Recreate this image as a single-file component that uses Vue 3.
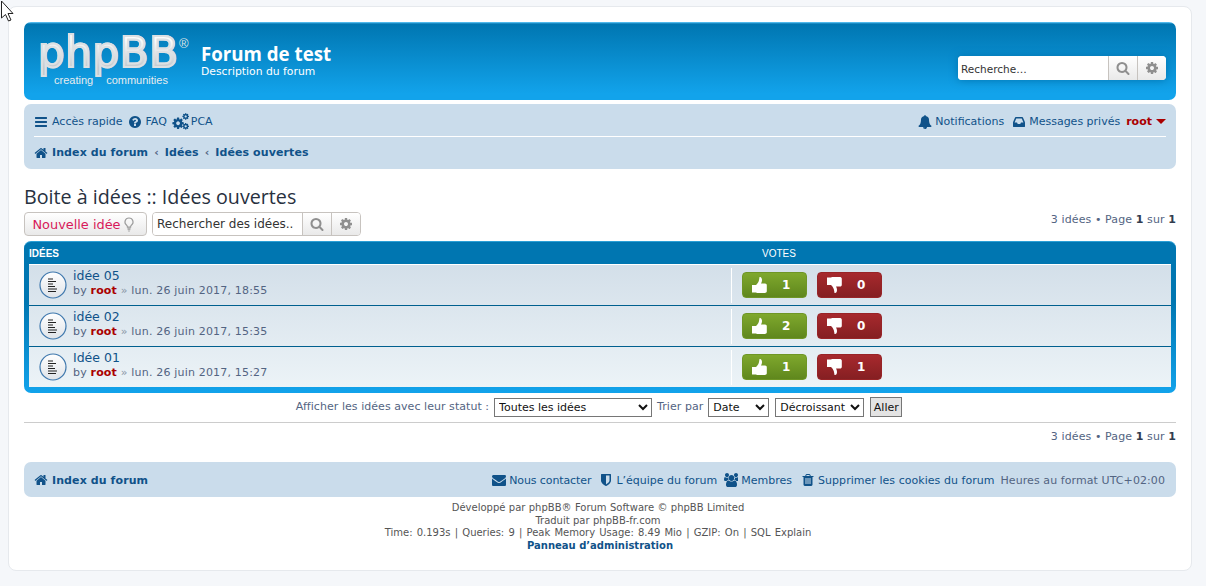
<script setup>
const I = {
  bars: 'M1664 1344v128q0 26-19 45t-45 19h-1408q-26 0-45-19t-19-45v-128q0-26 19-45t45-19h1408q26 0 45 19t19 45zm0-512v128q0 26-19 45t-45 19h-1408q-26 0-45-19t-19-45v-128q0-26 19-45t45-19h1408q26 0 45 19t19 45zm0-512v128q0 26-19 45t-45 19h-1408q-26 0-45-19t-19-45v-128q0-26 19-45t45-19h1408q26 0 45 19t19 45z',
  search: 'M1216 832q0-185-131.500-316.500t-316.500-131.500-316.500 131.500-131.500 316.500 131.500 316.500 316.500 131.500 316.500-131.500 131.500-316.500zm512 832q0 52-38 90t-90 38q-54 0-90-38l-343-342q-179 124-399 124-143 0-273.500-55.500t-225-150-150-225-55.500-273.500 55.500-273.500 150-225 225-150 273.500-55.500 273.500 55.500 225 150 150 225 55.500 273.500q0 220-124 399l343 343q37 37 37 90z',
  cog: 'M1152 896q0-106-75-181t-181-75-181 75-75 181 75 181 181 75 181-75 75-181zm512-109v222q0 12-8 23t-20 13l-185 28q-19 54-39 91 35 50 107 138 10 12 10 25t-9 23q-27 37-99 108t-94 71q-12 0-26-9l-138-108q-44 23-91 38-16 136-29 186-7 28-36 28h-222q-14 0-24.500-8.500t-11.500-21.500l-28-184q-49-16-90-37l-141 107q-10 9-25 9-14 0-25-11-126-114-165-168-7-10-7-23 0-12 8-23 15-21 51-66.500t54-70.500q-27-50-41-99l-183-27q-13-2-21-12.500t-8-23.500v-222q0-12 8-23t19-13l186-28q14-46 39-92-40-57-107-138-10-12-10-24 0-10 9-23 26-36 98.500-107.500t94.500-71.500q13 0 26 10l138 107q44-23 91-38 16-136 29-186 7-28 36-28h222q14 0 24.500 8.500t11.500 21.500l28 184q49 16 90 37l142-107q9-9 24-9 13 0 25 10 129 119 165 170 7 8 7 22 0 12-8 23-15 21-51 66.500t-54 70.500q26 50 41 98l183 28q13 2 21 12.500t8 23.500z',
  home: 'M1472 992v480q0 26-19 45t-45 19h-384v-384h-256v384h-384q-26 0-45-19t-19-45v-480q0-1 .5-3t.5-3l575-474 575 474q1 2 1 6zm223-69l-62 74q-8 9-21 11h-3q-13 0-21-7l-692-577-692 577q-12 8-24 7-13-2-21-11l-62-74q-8-10-7-23.500t11-21.500l719-599q32-26 76-26t76 26l244 204v-195q0-14 9-23t23-9h192q14 0 23 9t9 23v408l219 182q10 8 11 21.500t-7 23.500z',
  question: 'M1024 1376v-192q0-14-9-23t-23-9h-192q-14 0-23 9t-9 23v192q0 14 9 23t23 9h192q14 0 23-9t9-23zm256-672q0-88-55.500-163t-138.500-116-170-41q-243 0-371 213-15 24 8 42l132 100q7 6 19 6 16 0 25-12 53-68 86-92 34-24 86-24 48 0 85.500 26t37.500 59q0 38-20 61t-68 45q-63 28-115.500 86.500t-52.500 125.500v36q0 14 9 23t23 9h192q14 0 23-9t9-23q0-19 21.500-49.500t54.500-49.500q32-18 49-28.500t46-35 44.500-48 28-60.500 12.500-81zm384 192q0 209-103 385.500t-279.500 279.500-385.500 103-385.500-103-279.500-279.500-103-385.500 103-385.500 279.500-279.500 385.500-103 385.500 103 279.500 279.500 103 385.500z',
  bell: 'M912 1696q0-16-16-16-59 0-101.500-42.500t-42.500-101.500q0-16-16-16t-16 16q0 73 51.500 124.500t124.500 51.500q16 0 16-16zm816-288q0 52-38 90t-90 38h-448q0 106-75 181t-181 75-181-75-75-181h-448q-52 0-90-38t-38-90q50-42 91-88t85-119.500 74.500-158.500 50-206 19.500-260q0-152 117-282.500t307-158.500q-8-19-8-39 0-40 28-68t68-28 68 28 28 68q0 20-8 39 190 28 307 158.500t117 282.500q0 139 19.500 260t50 206 74.500 158.500 85 119.500 91 88z',
  inbox: 'M1023 960h316q-1-3-2.500-8.500t-2.500-7.500l-212-496h-708l-212 496q-1 2-2.500 7.500t-2.500 8.500h316l95 192h320zm513 30v482q0 26-19 45t-45 19h-1408q-26 0-45-19t-19-45v-482q0-62 25-123l238-552q10-25 36.500-42t52.500-17h832q26 0 52.500 17t36.500 42l238 552q25 61 25 123z',
  envelope: 'M1792 710v794q0 66-47 113t-113 47h-1472q-66 0-113-47t-47-113v-794q44 49 101 87 362 246 497 345 57 42 92.500 65.500t94.500 48 110 24.500h2q51 0 110-24.500t94.500-48 92.500-65.500q170-123 498-345 57-39 100-87zm0-294q0 79-49 151t-122 123q-376 261-468 325-10 7-42.500 30.500t-54 38-52 32.500-57.500 27-50 9h-2q-23 0-50-9t-57.500-27-52-32.500-54-38-42.500-30.500q-91-64-262-182.500t-205-142.500q-62-42-117-115.500t-55-136.500q0-78 41.500-130t118.500-52h1472q65 0 112.500 47t47.500 113z',
  shield: 'M1344 960v-640h-448v1137q119-63 213-137 235-184 235-360zm192-768v768q0 86-33.500 170.500t-83 150-118 127.500-126.500 103-121 77.500-89.500 49.500-42.500 20q-12 6-26 6t-26-6q-16-7-42.500-20t-89.500-49.500-121-77.500-126.500-103-118-127.500-83-150-33.500-170.500v-768q0-26 19-45t45-19h1152q26 0 45 19t19 45z',
  group: 'M593 896q-162 5-265 128h-134q-82 0-138-40.500t-56-118.500q0-353 124-353 6 0 43.500 21t97.500 42.500 119 21.500q67 0 133-23-5 37-5 66 0 139 81 256zm1071 637q0 120-73 189.500t-194 69.500h-874q-121 0-194-69.500t-73-189.500q0-53 3.500-103.500t14-109 26.500-108.500 43-97.500 62-81 85.500-53.500 111.500-20q10 0 43 21.500t73 48 107 48 135 21.500 135-21.500 107-48 73-48 43-21.500q61 0 111.500 20t85.500 53.500 62 81 43 97.500 26.500 108.500 14 109 3.500 103.500zm-1024-1277q0 106-75 181t-181 75-181-75-75-181 75-181 181-75 181 75 75 181zm704 384q0 159-112.500 271.500t-271.500 112.500-271.500-112.500-112.500-271.500 112.500-271.500 271.500-112.500 271.500 112.500 112.500 271.500zm576 225q0 78-56 118.500t-138 40.500h-134q-103-123-265-128 81-117 81-256 0-29-5-66 66 23 133 23 59 0 119-21.500t97.500-42.500 43.500-21q124 0 124 353zm-128-609q0 106-75 181t-181 75-181-75-75-181 75-181 181-75 181 75 75 181z',
  trash: 'M704 1376v-704q0-14-9-23t-23-9h-64q-14 0-23 9t-9 23v704q0 14 9 23t23 9h64q14 0 23-9t9-23zm256 0v-704q0-14-9-23t-23-9h-64q-14 0-23 9t-9 23v704q0 14 9 23t23 9h64q14 0 23-9t9-23zm256 0v-704q0-14-9-23t-23-9h-64q-14 0-23 9t-9 23v704q0 14 9 23t23 9h64q14 0 23-9t9-23zm-544-992h448l-48-117q-7-9-17-11h-317q-10 2-17 11zm928 32v64q0 14-9 23t-23 9h-96v948q0 83-47 143.500t-113 60.500h-832q-66 0-113-58.500t-47-141.500v-952h-96q-14 0-23-9t-9-23v-64q0-14 9-23t23-9h309l70-167q15-37 54-63t79-26h320q40 0 79 26t54 63l70 167h309q14 0 23 9t9 23z',
  thumb: 'M0 9h4l1-1c1-1 2-3 2.200-5L7.500 1c1.500-.5 2.500 1 2.500 3 0 1.500-.5 2.500-1 3.500h4c1.200 0 1.800.8 1.800 1.800v6c0 1-1 1.700-2 1.700H5l-1-.5H0z'
}
const ideas = [
  { title: 'idée 05', date: 'lun. 26 juin 2017, 18:55', up: 1, down: 0 },
  { title: 'idée 02', date: 'lun. 26 juin 2017, 15:35', up: 2, down: 0 },
  { title: 'Idée 01', date: 'lun. 26 juin 2017, 15:27', up: 1, down: 1 }
]
const lines = [
  { y: 7.500, w: 5 }, { y: 10, w: 8 }, { y: 12.500, w: 5 },
  { y: 15, w: 7 }, { y: 17.500, w: 9 }, { y: 20, w: 8 }
]
</script>

<template>
  <div class="page">
    <svg class="cursor" width="14" height="24" viewBox="0 0 14 24">
      <path d="M1.500 1v17l4-3.500 3 6.500 2.500-1-3-6.500h5z" fill="#fff" stroke="#222" stroke-width="1" />
    </svg>
    <div class="wrap">
      <header class="headerbar">
        <div class="logo">
          <div class="logo-word">phpBB</div>
          <div class="reg">®</div>
          <div class="logo-sub"><span>creating</span><span>communities</span></div>
        </div>
        <div class="site">
          <h1>Forum de test</h1>
          <p>Description du forum</p>
        </div>
        <div class="sbox head-search">
          <input class="sinput" type="text" placeholder="Recherche…" />
          <button class="sbtn"><svg class="ic ic-14" viewBox="0 0 1792 1792"><path :d="I.search" /></svg></button>
          <button class="sbtn"><svg class="ic ic-14" viewBox="0 0 1792 1792"><path :d="I.cog" /></svg></button>
        </div>
      </header>

      <nav class="navbar">
        <div class="nav-row nav-top">
          <div class="links lefts">
            <a class="wide"><svg class="ic" viewBox="0 0 1792 1792"><path :d="I.bars" /></svg>Accès rapide</a>
            <a><svg class="ic" viewBox="0 0 1792 1792"><path :d="I.question" /></svg>FAQ</a>
            <a class="gears">
              <svg class="ic ic-gears" viewBox="0 0 1792 1792">
                <path :d="I.cog" transform="translate(-60 380) scale(.78)" />
                <path :d="I.cog" transform="translate(1040 -40) scale(.45)" />
                <path :d="I.cog" transform="translate(1040 1000) scale(.45)" />
              </svg>PCA
            </a>
          </div>
          <div class="links rights">
            <a><svg class="ic" viewBox="0 0 1792 1792"><path :d="I.bell" /></svg>Notifications</a>
            <a><svg class="ic" viewBox="-128 0 1792 1792"><path :d="I.inbox" /></svg>Messages privés</a>
            <a class="user">root <i class="caret"></i></a>
          </div>
        </div>
        <div class="nav-row crumbs">
          <a><svg class="ic" viewBox="0 0 1792 1792"><path :d="I.home" /></svg>Index du forum</a>
          <span class="sep">‹</span>
          <a>Idées</a>
          <span class="sep">‹</span>
          <a>Idées ouvertes</a>
        </div>
      </nav>

      <h2 class="title">Boite à idées :: Idées ouvertes</h2>

      <div class="action-bar">
        <button class="new-btn">Nouvelle idée
          <svg class="bulb" viewBox="0 0 12 16">
            <path d="M6 1a4.300 4.300 0 0 0-2.500 7.800c.6.500.8 1.200.8 2h3.400c0-.8.2-1.500.8-2A4.300 4.300 0 0 0 6 1z" fill="none" stroke="#9a9a9a" stroke-width="1.200" />
            <path d="M4.300 12h3.400M4.500 13.500h3M5.200 15h1.600" stroke="#9a9a9a" stroke-width="1" />
          </svg>
        </button>
        <div class="sbox idea-search">
          <input class="sinput" type="text" placeholder="Rechercher des idées.." />
          <button class="sbtn"><svg class="ic ic-14" viewBox="0 0 1792 1792"><path :d="I.search" /></svg></button>
          <button class="sbtn"><svg class="ic ic-14" viewBox="0 0 1792 1792"><path :d="I.cog" /></svg></button>
        </div>
        <div class="pagination top-pag">3 idées • Page <b>1</b> sur <b>1</b></div>
      </div>

      <section class="forumbg">
        <div class="heads">
          <span class="h-ideas">Idées</span>
          <span class="h-votes">Votes</span>
        </div>
        <ul class="rows">
          <li v-for="idea in ideas" :key="idea.title" class="row">
            <div class="row-main">
              <svg class="topic" width="28" height="28" viewBox="0 0 28 28">
                <defs>
                  <linearGradient id="tg" x1="0" y1="0" x2="0" y2="1">
                    <stop offset="0" stop-color="#ffffff" />
                    <stop offset="1" stop-color="#dfe3e8" />
                  </linearGradient>
                </defs>
                <circle cx="14" cy="14" r="13" fill="url(#tg)" stroke="#3f78ad" stroke-width="1.200" />
                <rect v-for="(l, k) in lines" :key="k" x="9" :y="l.y" :width="l.w" height="1" fill="#222" />
              </svg>
              <div class="row-text">
                <a class="row-title">{{ idea.title }}</a>
                <div class="row-meta">by <b>root</b> <span class="raq">»</span> {{ idea.date }}</div>
              </div>
            </div>
            <div class="row-votes">
              <div class="vote up">
                <svg class="thumb" viewBox="0 0 15 18"><path :d="I.thumb" /></svg>
                <span>{{ idea.up }}</span>
              </div>
              <div class="vote down">
                <svg class="thumb flip" viewBox="0 0 15 18"><path :d="I.thumb" /></svg>
                <span>{{ idea.down }}</span>
              </div>
            </div>
          </li>
        </ul>
      </section>

      <form class="sortbar" @submit.prevent>
        <label>Afficher les idées avec leur statut :</label>
        <select class="sel s1"><option>Toutes les idées</option></select>
        <label>Trier par</label>
        <select class="sel s2"><option>Date</option></select>
        <select class="sel s3"><option>Décroissant</option></select>
        <button class="go">Aller</button>
      </form>
      <hr class="rule" />
      <div class="pagination bottom-pag">3 idées • Page <b>1</b> sur <b>1</b></div>

      <nav class="navbar foot">
        <div class="links crumbs"><a><svg class="ic" viewBox="0 0 1792 1792"><path :d="I.home" /></svg>Index du forum</a></div>
        <div class="links">
          <a class="contact"><svg class="ic" viewBox="0 0 1792 1792"><path :d="I.envelope" /></svg>Nous contacter</a>
          <a><svg class="ic" viewBox="0 0 1792 1792"><path :d="I.shield" /></svg>L’équipe du forum</a>
          <a class="members"><svg class="ic" viewBox="0 0 1792 1792"><path :d="I.group" /></svg>Membres</a>
          <a class="cookies"><svg class="ic" viewBox="0 0 1792 1792"><path :d="I.trash" /></svg>Supprimer les cookies du forum</a>
          <span class="tz">Heures au format UTC+02:00</span>
        </div>
      </nav>

      <footer class="copy">
        <div class="cl">Développé par phpBB® Forum Software © phpBB Limited</div>
        <div class="cl">Traduit par phpBB-fr.com</div>
        <div class="cl stats">Time: 0.193s | Queries: 9 | Peak Memory Usage: 8.49 Mio | GZIP: On | SQL Explain</div>
        <div class="admin">Panneau d’administration</div>
      </footer>
    </div>
  </div>
</template>

<style>
html, body { margin: 0; background: #f5f7fa; }
</style>

<style scoped>
.page {
  width: 1206px; height: 586px; box-sizing: border-box; padding: 6px 14px 0 8px;
  font-family: "DejaVu Sans", Verdana, sans-serif; font-size: 11px; color: #536482;
  overflow: hidden; position: relative;
}
.cursor { position: absolute; left: 0; top: 0; z-index: 3; }
.wrap {
  width: 1184px; height: 565px; box-sizing: border-box; background: #fff;
  border: 1px solid #e6e9ed; border-radius: 8px; padding: 15px;
}
.ic { width: 14px; height: 14px; fill: #105289; flex: none; }
.ic-14 { width: 14px; height: 14px; fill: #8f8f8f; }
.ic-gears { width: 17px; height: 17px; }
a { color: #105289; display: inline-flex; align-items: center; gap: 3px; }

.headerbar {
  height: 78px; box-sizing: border-box; display: flex; align-items: flex-start;
  border-radius: 7px; padding: 14px 10px 0 14px; color: #fff; position: relative;
  background: linear-gradient(to bottom, #6aceff 0, #0076b1 2px, #12a3eb 92%);
}
.logo { width: 163px; height: 52px; flex: none; position: relative; }
.logo-word {
  font-family: "DejaVu Sans", sans-serif; font-size: 42px; line-height: 50px;
  letter-spacing: .6px; margin: -8px 0 0 0; width: 141px; height: 50px;
  background: linear-gradient(to bottom, #fbfcfc 25%, #c2c8cd 80%);
  -webkit-background-clip: text; background-clip: text; color: transparent;
  -webkit-text-stroke: 2px #dce0e3;
}
.reg {
  font-family: "Liberation Sans", sans-serif; font-size: 13px; line-height: 13px;
  position: absolute; left: 141px; top: 1px; color: #dfe3e6;
}
.logo-sub {
  position: absolute; left: 16px; top: 38px; display: flex; gap: 13px;
  font-family: "Liberation Sans", Arial, sans-serif; font-size: 11px; line-height: 12px; color: #e8ecef;
}
.site h1 {
  margin: 7px 0 0; font-size: 18.700px; line-height: 22px; font-weight: 700; color: #fff;
  font-family: "Open Sans", sans-serif;
}
.site p { margin: 0; font-size: 10.800px; line-height: 13px; color: #fff; }

.sbox { display: flex; height: 24px; box-sizing: border-box; background: #fff; border-radius: 4px; overflow: hidden; }
.head-search { position: absolute; right: 10px; top: 34px; width: 208px; box-shadow: 0 0 8px #0075b0; }
.sinput {
  flex: 1; min-width: 0; border: 0; outline: 0; background: #fff; padding: 2px 3px 0;
  font: 10.500px "DejaVu Sans", sans-serif; color: #333;
}
.sinput::placeholder { color: #333; opacity: 1; }
.sbtn {
  width: 29px; flex: none; padding: 0; display: flex; align-items: center; justify-content: center;
  border: 0; border-left: 1px solid #c7c3bf;
  background: linear-gradient(to bottom, #fff, #e9e9e9);
}

.navbar { background: #cadceb; border-radius: 7px; margin-top: 4px; height: 65px; box-sizing: border-box; }
.nav-row { margin: 0 10px; }
.nav-top {
  display: flex; justify-content: space-between; align-items: center;
  height: 33px; padding-top: 3px; border-bottom: 1px solid #fff; box-sizing: border-box;
}
.links { display: flex; align-items: center; gap: 8px; }
.lefts { gap: 6px; }
.wide { gap: 4px; }
.gears { margin-left: -1px; gap: 2px; }
.rights { gap: 8px; }
.rights a { gap: 3px; }
.rights .user { color: #aa0000; font-weight: 700; gap: 4px; margin-left: -2px; }
.caret { width: 0; height: 0; border: 5px solid transparent; border-top: 5px solid #aa0000; border-bottom: 0; }
.crumbs {
  display: flex; align-items: center; height: 31px; font-weight: 700; gap: 6px; font-size: 11px;
}
.crumbs a { gap: 4px; letter-spacing: .1px; }
.sep { color: #536482; font-weight: 700; font-size: 11px; }

.title {
  margin: 17px 0 0; font-size: 19.700px; line-height: 21px; font-weight: 400; color: #28313f;
  font-family: "Open Sans", sans-serif;
}
.action-bar { display: flex; align-items: center; margin-top: 5px; height: 24px; gap: 5px; }
.new-btn {
  width: 123px; height: 24px; box-sizing: border-box; padding: 1px 4px 0 0; display: flex; align-items: center; justify-content: center; gap: 2px;
  border: 1px solid #c7c3bf; border-radius: 4px; background: linear-gradient(to bottom, #fff, #e9e9e9);
  font: 12.900px "DejaVu Sans", sans-serif; color: #d8195a; white-space: nowrap;
}
.bulb { width: 12px; height: 15px; flex: none; }
.idea-search { width: 209px; border: 1px solid #c7c3bf; }
.idea-search .sinput { font-size: 12px; color: #333; padding: 0 4px; }
.idea-search .sbtn { width: 29px; }
.top-pag { margin-left: auto; margin-top: -8px; }
.pagination { color: #536482; line-height: 14px; letter-spacing: .1px; }
.pagination b { color: #323d4f; }

.forumbg {
  margin-top: 5px; height: 152px; box-sizing: border-box; border-radius: 7px; padding: 0 5px 6px;
  background: linear-gradient(to bottom, #0076b1 0, #0076b1 60px, #12a3eb 100%);
  border-top: 1px solid #2a9fd6;
}
.heads {
  height: 22px; display: flex; align-items: center; color: #fff; text-transform: uppercase;
  font-family: "Liberation Sans", Arial, sans-serif; font-size: 10px;
}
.h-ideas { font-weight: 700; width: 733px; }
.rows { list-style: none; margin: 0; padding: 0; background: linear-gradient(to bottom, #d3dfe9, #ecf3f7); }
.row { height: 40px; display: flex; border-top: 1px solid #fff; box-sizing: content-box; }
.row + .row { border-top: 1px solid #00608f; }
.row-main { width: 702px; box-sizing: border-box; display: flex; align-items: center; padding-left: 10px; gap: 6px; flex: none; }
.topic { flex: none; }
.row-text { margin-top: -4px; }
.row-title { display: block; color: #105289; font-size: 12.500px; line-height: 15px; }
.row-meta { line-height: 15px; color: #536482; letter-spacing: .18px; }
.row-meta b { color: #aa0000; }
.raq { color: #8a97a6; }
.row-votes {
  position: relative; flex: 1; display: flex; align-items: center; gap: 10px; padding-left: 11px;
}
.row-votes::before {
  content: ""; position: absolute; left: 0; top: 3px; bottom: 2px; width: 1px; background: #fff;
}
.vote {
  width: 65px; height: 26px; box-sizing: border-box; border-radius: 4px; display: flex; align-items: center;
  padding-left: 9px; color: #fff; font-weight: 700; font-family: "DejaVu Sans", sans-serif;
}
.vote span { margin-left: 15px; font-size: 12px; }
.up { background: linear-gradient(to bottom, #7fa82d, #5f871d); border: 1px solid #6f9626; }
.down { background: linear-gradient(to bottom, #a7292d, #851f22); border: 1px solid #982427; }
.thumb { width: 15px; height: 18px; fill: #fff; flex: none; }
.flip { transform: scaleY(-1); }

.sortbar {
  display: flex; align-items: center; justify-content: center; gap: 5px; margin-top: 5px; height: 19px; padding-right: 2px;
}
.sortbar label { margin-top: -2px; white-space: nowrap; letter-spacing: .05px; }
.sel {
  height: 19px; box-sizing: border-box; background: #fff; border: 1px solid #767676; border-radius: 0;
  font: 11px "DejaVu Sans", sans-serif; color: #111; padding: 0;
}
.s1 { width: 158px; }
.s2 { width: 61px; margin-right: 1px; }
.s3 { width: 89px; margin-right: 1px; }
.go {
  width: 32px; height: 20px; padding: 0; box-sizing: border-box; background: #e3e3e3; border: 1px solid #767676;
  font: 11px "DejaVu Sans", sans-serif; color: #111; margin-top: -1px;
}
.rule { border: 0; border-top: 1px solid #cccccc; margin: 5px 0 0; }
.bottom-pag { text-align: right; margin-top: 7px; }
.foot {
  margin-top: 18px; height: 35px; display: flex; justify-content: space-between; align-items: center; padding: 1px 11px 0 10px;
}
.foot .crumbs { height: auto; }
.contact { letter-spacing: -.1px; }
.members { margin-left: -1px; }
.cookies { margin-left: 1px; letter-spacing: .04px; }
.tz { color: #536482; letter-spacing: .08px; margin-left: -2px; }
.copy { text-align: center; font-size: 10px; line-height: 12.500px; color: #555555; margin-top: 5px; }
.cl { padding-right: 4px; word-spacing: .2px; }
.stats { word-spacing: 1px; }
.admin { color: #105289; font-weight: 700; }
</style>
